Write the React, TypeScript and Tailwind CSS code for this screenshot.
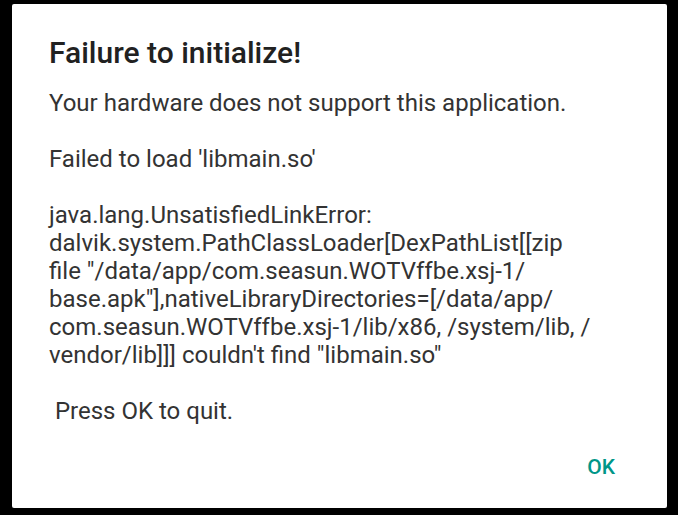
export default function App() {
  const font = { fontFamily: "Roboto, 'Noto Sans', sans-serif" };
  return (
    <div className="w-[678px] h-[515px] bg-black pt-[4px] pl-[12px]" style={font}>
      <div className="w-[655px] h-[504px] bg-white rounded-[2px] flex flex-col pl-[37px] pr-[37px]">
        <h1 className="mt-[31px] text-[30px] leading-[36px] font-medium text-[#212121] whitespace-nowrap">
          Failure to initialize!
        </h1>
        <div className="mt-[18px] text-[24px] leading-[28px] text-[#333333] whitespace-nowrap">
          <p>Your hardware does not support this application.</p>
          <p className="mt-[28px]">Failed to load 'libmain.so'</p>
          <p className="mt-[28px]">
            java.lang.UnsatisfiedLinkError:
            <br />
            dalvik.system.PathClassLoader[DexPathList[[zip
            <br />
            file "/data/app/com.seasun.WOTVffbe.xsj-1/
            <br />
            base.apk"],nativeLibraryDirectories=[/data/app/
            <br />
            com.seasun.WOTVffbe.xsj-1/lib/x86, /system/lib, /
            <br />
            vendor/lib]]] couldn't find "libmain.so"
          </p>
          <p className="mt-[28px] whitespace-pre"> Press OK to quit.</p>
        </div>
        <div className="mt-auto mb-[29px] flex justify-end pr-[15px]">
          <button className="text-[21px] leading-[24px] font-medium text-[#009688] uppercase">
            OK
          </button>
        </div>
      </div>
    </div>
  );
}
